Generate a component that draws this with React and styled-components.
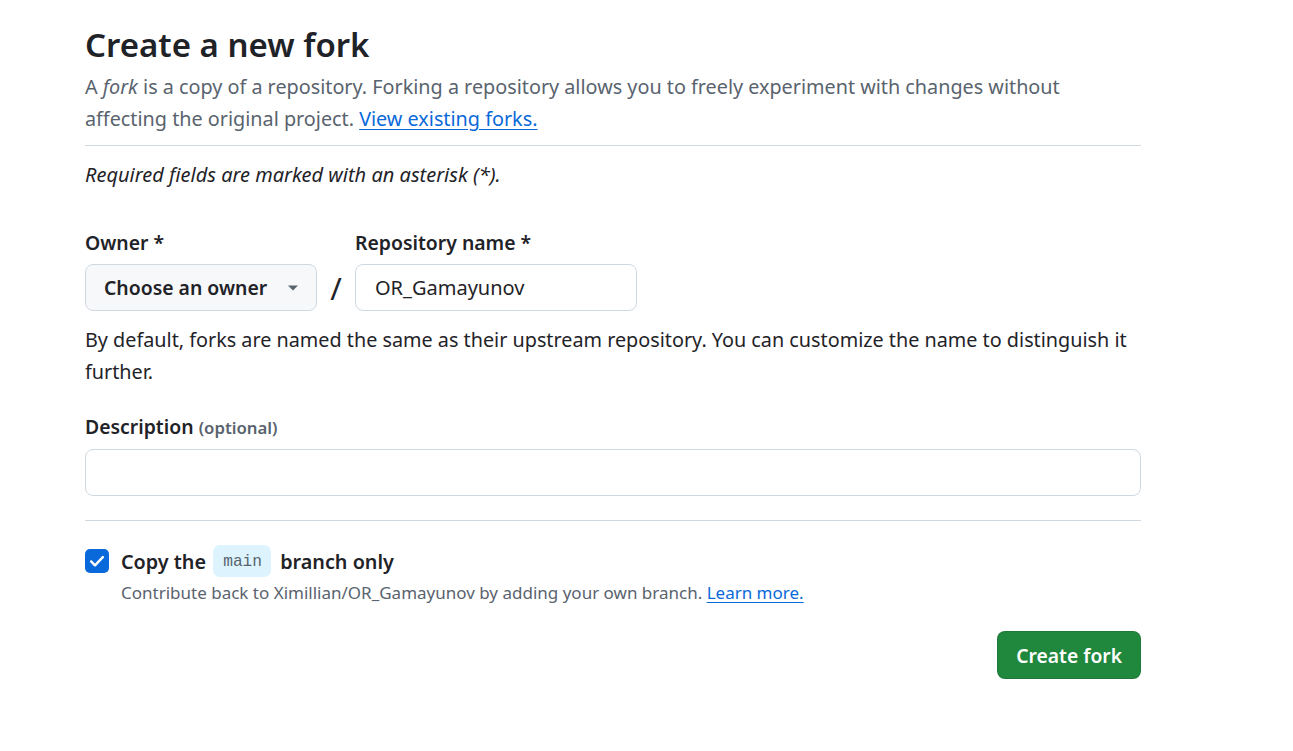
import React from 'react';
import styled, { createGlobalStyle } from 'styled-components';

const GlobalStyle = createGlobalStyle`
  body {
    margin: 0;
    background: #ffffff;
    color: #1f2328;
    font-family: "Noto Sans", "Liberation Sans", sans-serif;
  }
`;

const Page = styled.div`
  width: 1056px;
  padding: 22px 0 40px 85px;
`;

const Title = styled.h1`
  margin: 0;
  font-size: 33px;
  line-height: 46px;
  font-weight: 600;
  color: #1f2328;
`;

const Lead = styled.p`
  margin: 3px 0 0;
  font-size: 19.8px;
  line-height: 32px;
  color: #59636e;
`;

const Link = styled.a`
  color: #0969da;
  text-decoration: underline;
  text-underline-offset: 3px;
`;

const Divider = styled.hr`
  border: 0;
  border-top: 1px solid #d1d9e0;
  margin: ${p => p.$top}px 0 ${p => p.$bottom}px;
`;

const Note = styled.p`
  margin: 0;
  font-size: 20px;
  line-height: 30px;
  font-style: italic;
`;

const OwnerRow = styled.div`
  display: flex;
  align-items: flex-end;
  margin-top: 40px;
`;

const Field = styled.div`
  display: flex;
  flex-direction: column;
`;

const Label = styled.label`
  font-size: 19.4px;
  line-height: 26px;
  font-weight: 600;
  margin-bottom: 8px;
`;

const Muted = styled.span`
  font-size: 16.8px;
  color: #59636e;
  font-weight: 600;
`;

const SelectButton = styled.button`
  display: flex;
  align-items: center;
  justify-content: space-between;
  width: 232px;
  height: 47px;
  padding: 0 17px 0 18px;
  background: #f6f8fa;
  border: 1px solid #d1d9e0;
  border-radius: 8px;
  font-family: inherit;
  font-size: 19.4px;
  font-weight: 600;
  color: #1f2328;
`;

const Slash = styled.span`
  width: 38px;
  height: 47px;
  display: flex;
  align-items: center;
  justify-content: center;
  font-size: 31px;
  color: #1f2328;
`;

const Input = styled.input`
  box-sizing: border-box;
  width: ${p => p.$width || '100%'};
  height: 47px;
  padding: 0 19px;
  border: 1px solid #d1d9e0;
  border-radius: 8px;
  font-family: inherit;
  font-size: 20px;
  color: #1f2328;
  background: #ffffff;
  outline: none;
`;

const Help = styled.p`
  margin: 13px 0 0;
  font-size: 19.8px;
  line-height: 32px;
  color: #1f2328;
`;

const DescField = styled(Field)`
  margin-top: 26px;
`;

const CheckRow = styled.div`
  display: flex;
  gap: 12px;
  align-items: flex-start;
`;

const Box = styled.span`
  width: 24px;
  height: 24px;
  margin-top: 4px;
  border-radius: 5px;
  background: #0969da;
  display: flex;
  align-items: center;
  justify-content: center;
  flex-shrink: 0;
`;

const CheckText = styled.div`
  display: flex;
  flex-direction: column;
`;

const CheckLabel = styled.div`
  font-size: 19.8px;
  line-height: 34px;
  height: 34px;
  font-weight: 600;
`;

const Code = styled.code`
  display: inline-block;
  font-family: "Liberation Mono", "DejaVu Sans Mono", monospace;
  font-size: 16.2px;
  font-weight: 400;
  line-height: 28px;
  padding: 3px 9px 1px 10px;
  color: #59636e;
  background: #ddf4ff;
  border-radius: 7px;
  margin: 0 4px 0 2px;
  vertical-align: top;
`;

const Hint = styled.div`
  font-size: 17px;
  line-height: 26px;
  color: #59636e;
  margin-top: 1px;
`;

const Actions = styled.div`
  display: flex;
  justify-content: flex-end;
  margin-top: 25px;
`;

const Primary = styled.button`
  height: 48px;
  padding: 0 18px;
  background: #1f883d;
  border: 1px solid rgba(31, 35, 40, 0.15);
  border-radius: 8px;
  color: #ffffff;
  font-family: inherit;
  font-size: 19.3px;
  font-weight: 600;
`;

export default function App() {
  return (
    <Page>
      <GlobalStyle />
      <Title>Create a new fork</Title>
      <Lead>
        A <em>fork</em> is a copy of a repository. Forking a repository allows you to freely experiment with changes without
        affecting the original project. <Link href="#">View existing forks.</Link>
      </Lead>
      <Divider $top={10} $bottom={14} />
      <Note>Required fields are marked with an asterisk (*).</Note>

      <OwnerRow>
        <Field>
          <Label>Owner *</Label>
          <SelectButton>
            Choose an owner
            <svg width="12" height="8" viewBox="0 0 12 8">
              <path d="M1 1.5h10L6 6.5z" fill="#59636e" />
            </svg>
          </SelectButton>
        </Field>
        <Slash>/</Slash>
        <Field>
          <Label>Repository name *</Label>
          <Input $width="282px" defaultValue="OR_Gamayunov" />
        </Field>
      </OwnerRow>
      <Help>
        By default, forks are named the same as their upstream repository. You can customize the name to distinguish it
        further.
      </Help>

      <DescField>
        <Label>
          Description <Muted>(optional)</Muted>
        </Label>
        <Input />
      </DescField>

      <Divider $top={24} $bottom={24} />

      <CheckRow>
        <Box>
          <svg width="18" height="18" viewBox="0 0 16 16">
            <path d="M2.8 8.4l3.4 3.4L13.2 4.6" fill="none" stroke="#ffffff" strokeWidth="2.2" strokeLinecap="round" strokeLinejoin="round" />
          </svg>
        </Box>
        <CheckText>
          <CheckLabel>
            Copy the <Code>main</Code> branch only
          </CheckLabel>
          <Hint>
            Contribute back to Ximillian/OR_Gamayunov by adding your own branch. <Link href="#">Learn more.</Link>
          </Hint>
        </CheckText>
      </CheckRow>

      <Actions>
        <Primary>Create fork</Primary>
      </Actions>
    </Page>
  );
}
